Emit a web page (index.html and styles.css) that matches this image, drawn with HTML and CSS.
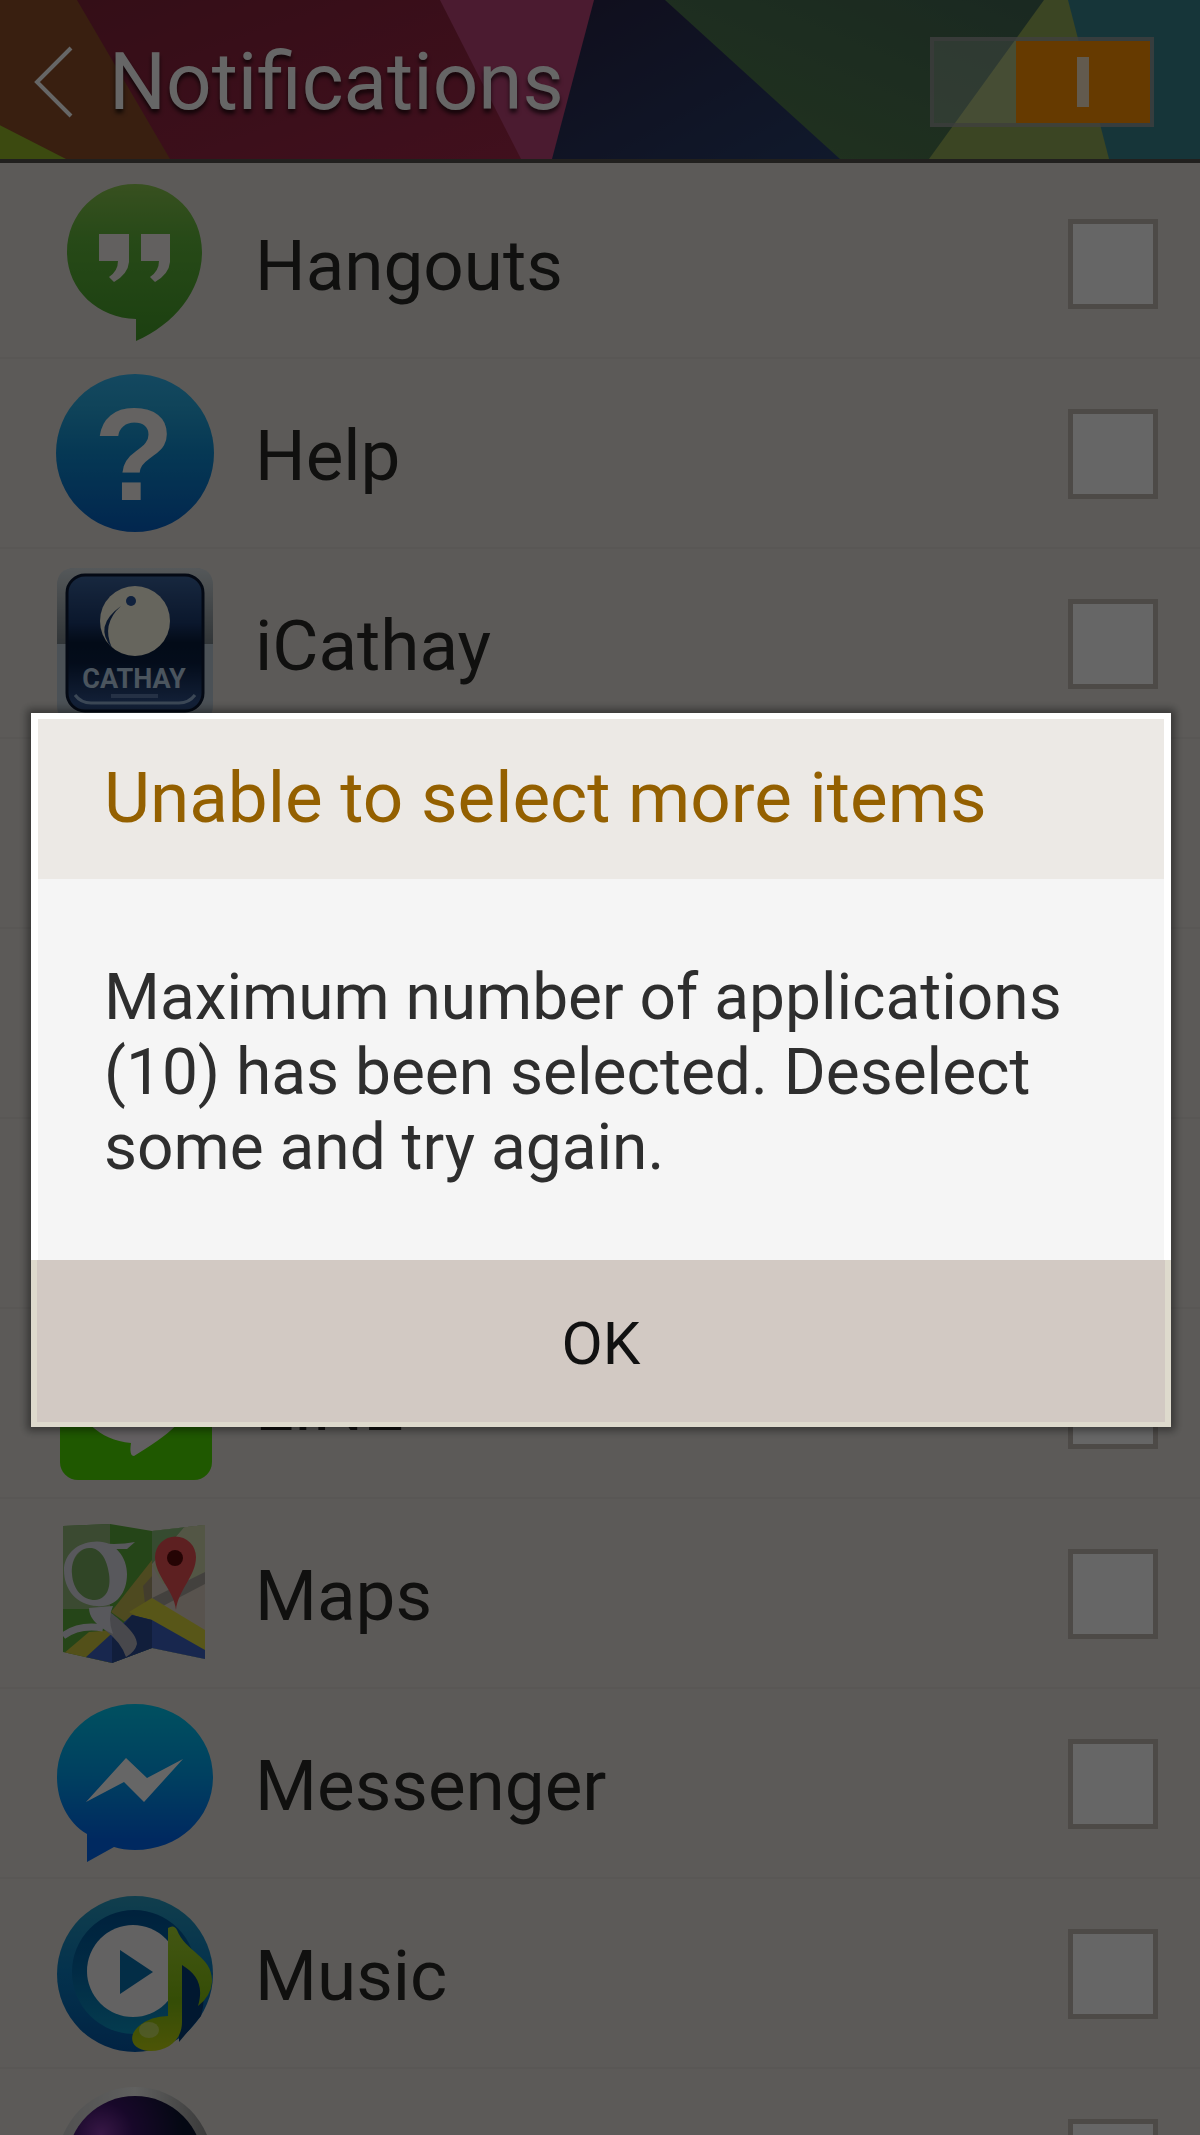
FILE: index.html
```html
<!DOCTYPE html>
<html lang="en">
<head>
<meta charset="utf-8">
<meta name="viewport" content="width=device-width, initial-scale=1">
<title>Notifications</title>
<link rel="stylesheet" href="styles.css">
</head>
<body>
<div class="screen">
  <header class="topbar">
    <svg class="topbar-art" viewBox="0 0 1200 160" preserveAspectRatio="none" aria-hidden="true">
      <defs>
        <linearGradient id="navy" x1="0" y1="0" x2="1" y2="1"><stop offset="0" stop-color="#2a2448"/><stop offset="1" stop-color="#2a406e"/></linearGradient>
        <linearGradient id="wine" x1="0" y1="0" x2="1" y2="1"><stop offset="0" stop-color="#82233a"/><stop offset="1" stop-color="#a2284a"/></linearGradient>
        <linearGradient id="forest" x1="0" y1="1" x2="1" y2="0"><stop offset="0" stop-color="#54804c"/><stop offset="1" stop-color="#426654"/></linearGradient>
      </defs>
      <rect width="1200" height="160" fill="#37868f"/>
      <path d="M1040 0H1068L1109 160H920z" fill="#94ac58"/>
      <path d="M660 0H1044L929 160H830z" fill="url(#forest)"/>
      <path d="M590 0H665L840 160H550z" fill="url(#navy)"/>
      <path d="M435 0H594L552 160H515z" fill="#bc4478"/>
      <path d="M70 0H440L521 160H160z" fill="url(#wine)"/>
      <path d="M0 0H77L170 160H0z" fill="#8e4e2a"/>
      <path d="M0 126L66 160H0z" fill="#96b928"/>
    </svg>
    <button class="back" type="button" aria-label="Back">
      <svg viewBox="0 0 44 76"><path d="M40 4L6 38L40 72" fill="none" stroke="#fff" stroke-width="4"/></svg>
    </button>
    <h1 class="title">Notifications</h1>
    <button class="switch" type="button" role="switch" aria-checked="true" aria-label="Notifications"><span class="knob"><span class="mark"></span></span></button>
  </header>

  <ul class="apps">
    <li class="app"><label class="app-label">
      <svg class="icon" viewBox="0 0 160 160">
        <defs><linearGradient id="hang" x1="0" y1="0" x2="0" y2="1"><stop offset="0" stop-color="#8cc850"/><stop offset=".35" stop-color="#62b83c"/><stop offset="1" stop-color="#46a02a"/></linearGradient></defs>
        <path d="M80 0C118 0 147 30 147 68C147 106 120 140 81 157V135C42 134 12 105 12 68C12 30 42 0 80 0z" fill="url(#hang)"/>
        <path d="M44 50H74V78Q73 90 59 98L54 93Q63 87 63 77H44zM86 50H115V78Q114 90 100 98L95 93Q104 87 104 77H86z" fill="#f6f0ee"/>
      </svg>
      <span class="name">Hangouts</span><input class="check" type="checkbox"></label></li>
    <li class="app"><label class="app-label">
      <svg class="icon" viewBox="0 0 160 160">
        <defs><linearGradient id="help" x1="0" y1="0" x2="0" y2="1"><stop offset="0" stop-color="#32b4f0"/><stop offset=".2" stop-color="#28aae0"/><stop offset=".5" stop-color="#0f8cd2"/><stop offset="1" stop-color="#0560c4"/></linearGradient></defs>
        <circle cx="80" cy="79" r="79" fill="url(#help)"/>
        <text class="help-mark" x="79" y="126">?</text>
      </svg>
      <span class="name">Help</span><input class="check" type="checkbox"></label></li>
    <li class="app"><label class="app-label">
      <svg class="icon" viewBox="0 0 160 160">
        <defs>
          <linearGradient id="cat" x1="0" y1="0" x2="0" y2="1"><stop offset="0" stop-color="#3c649e"/><stop offset=".35" stop-color="#1c3c70"/><stop offset=".5" stop-color="#081c3c"/><stop offset=".65" stop-color="#0a2044"/><stop offset="1" stop-color="#365a98"/></linearGradient>
          <linearGradient id="glass" x1="0" y1="0" x2="0" y2="1"><stop offset="0" stop-color="#d4dce0"/><stop offset="1" stop-color="#7c868c"/></linearGradient>
        </defs>
        <rect x="2" y="4" width="156" height="156" rx="18" fill="#bccad6"/>
        <path d="M2 80V22Q2 4 20 4H140Q158 4 158 22V80z" fill="url(#glass)"/>
        <rect x="12" y="11" width="136" height="136" rx="18" fill="url(#cat)" stroke="#0a1832" stroke-width="3"/>
        <path d="M20 131Q26 139 36 139H124Q134 139 140 131" fill="none" stroke="#96b4d8" stroke-width="3"/>
        <circle cx="80" cy="57" r="35" fill="#fffce8"/>
        <path d="M66 42Q46 60 57 84Q38 62 66 42z" fill="#1c3c70"/>
        <circle cx="76" cy="37" r="5" fill="#28549a"/>
        <text class="cathay" x="79" y="124">CATHAY</text>
        <path d="M56 132H103" stroke="#5c7cac" stroke-width="4"/>
      </svg>
      <span class="name">iCathay</span><input class="check" type="checkbox"></label></li>
    <li class="app"></li>
    <li class="app"></li>
    <li class="app"></li>
    <li class="app"><label class="app-label">
      <svg class="icon" viewBox="0 0 160 160">
        <rect x="5" y="5" width="152" height="151" rx="18" fill="#4edc00"/>
        <path d="M80 20C112 20 138 42 138 70C138 92 112 112 79 132Q74 132 76 119C44 116 22 94 22 70C22 42 48 20 80 20z" fill="#f6eef2"/>
      </svg>
      <span class="name">LINE</span><input class="check" type="checkbox"></label></li>
    <li class="app"><label class="app-label">
      <svg class="icon" viewBox="0 0 160 160">
        <defs><clipPath id="sheet"><path d="M8 12L55 10L97 17L150 11V145L97 134L57 149L8 138z"/></clipPath></defs>
        <g clip-path="url(#sheet)">
          <rect width="160" height="160" fill="#5cac3c"/>
          <path d="M8 8H55V95H8z" fill="#94b87c"/>
          <path d="M97 8H150V145H97z" fill="#dccfc2"/>
          <path d="M97 8H134L97 50z" fill="#88bc78"/>
          <path d="M134 8H150V62L108 70L97 52z" fill="#d0d8ac"/>
          <path d="M97 84L150 58V70L108 92z" fill="#a8a49c"/>
          <path d="M97 46L56 98L76 112L97 90z" fill="#c4b850"/>
          <path d="M88 72L97 62V92L90 90z" fill="#a89a70"/>
          <path d="M97 84L150 116V138L74 98z" fill="#dcd83c"/>
          <path d="M8 140L34 118L58 116V150H8z" fill="#d0c840"/>
          <path d="M30 144L54 122L77 101L97 106L150 136V150H30z" fill="#3c62c4"/>
          <path d="M57 149V124L77 101L97 106V150z" fill="#2c4c94"/>
          <ellipse cx="37" cy="60" rx="21" ry="27" fill="#78ac60"/>
          <path d="M55 98C62 104 82 118 82 130Q80 138 71 143Q66 128 50 116z" fill="#b4b4be"/>
          <path d="M8 122Q24 110 48 114" fill="none" stroke="#dcdce6" stroke-width="7"/>
          <path d="M34 94Q34 106 50 116L58 120Q52 104 58 92z" fill="#dcdce6"/>
          <path d="M36 28C58 24 72 42 72 60C72 80 60 94 42 92C22 91 9 76 9 56C9 42 20 30 36 28zM34 34C22 35 16 46 17 60C18 76 28 86 40 86C52 85 56 74 54 60C52 44 44 33 34 34z" fill="#dcdce6" fill-rule="evenodd"/>
          <path d="M36 28Q60 32 80 28L72 35H54z" fill="#dcdce6"/>
        </g>
        <path d="M121 96C119 76 100 62 100 43A20 20 0 0 1 141 43C141 62 123 76 121 96z" fill="#e85054"/>
        <circle cx="120" cy="44" r="8" fill="#5c0a0c"/>
      </svg>
      <span class="name">Maps</span><input class="check" type="checkbox"></label></li>
    <li class="app"><label class="app-label">
      <svg class="icon" viewBox="0 0 160 160">
        <defs><linearGradient id="msg" x1="0" y1="0" x2="0" y2="1"><stop offset="0" stop-color="#00c8f0"/><stop offset=".45" stop-color="#00a0f0"/><stop offset=".85" stop-color="#0068f0"/></linearGradient></defs>
        <path d="M80 0C124 0 158 32 158 73S124 146 80 146Q68 146 59 143L32 158V130C12 118 2 96 2 73C2 32 36 0 80 0z" fill="url(#msg)"/>
        <path d="M31 98L71 54L92 74L128 55L89 98L69 78z" fill="#fff"/>
      </svg>
      <span class="name">Messenger</span><input class="check" type="checkbox"></label></li>
    <li class="app"><label class="app-label">
      <svg class="icon" viewBox="0 0 160 160">
        <defs>
          <linearGradient id="ring" x1="0" y1="0" x2="0" y2="1"><stop offset="0" stop-color="#2a9cc0"/><stop offset=".5" stop-color="#0a7cc0"/><stop offset="1" stop-color="#0458a8"/></linearGradient>
          <linearGradient id="well" x1="0" y1="0" x2="0" y2="1"><stop offset="0" stop-color="#005498"/><stop offset=".5" stop-color="#046cac"/><stop offset="1" stop-color="#0c94c4"/></linearGradient>
          <linearGradient id="note" x1="0" y1="0" x2="0" y2="1"><stop offset="0" stop-color="#a8d830"/><stop offset=".6" stop-color="#84c010"/><stop offset="1" stop-color="#c0d410"/></linearGradient>
        </defs>
        <circle cx="80" cy="80" r="78" fill="url(#ring)"/>
        <circle cx="79" cy="78" r="62" fill="url(#well)"/>
        <circle cx="78" cy="77" r="46" fill="#f8f4f6"/>
        <path d="M65 56L98 78L65 100z" fill="#0870b0"/>
        <path d="M129 70Q156 88 146 122L124 148V70z" fill="#043c78"/>
        <path d="M113 34Q119 30 122 36C130 58 158 62 157 88Q156 102 143 112C149 92 142 80 127 71V128C127 148 110 158 94 157C76 156 72 142 84 132Q96 122 113 122z" fill="url(#note)"/>
        <ellipse cx="94" cy="136" rx="10" ry="8" fill="#d8ec90" opacity=".6"/>
      </svg>
      <span class="name">Music</span><input class="check" type="checkbox"></label></li>
    <li class="app"><label class="app-label">
      <svg class="icon" viewBox="0 0 160 160">
        <defs>
          <radialGradient id="lens" cx=".25" cy=".28" r=".6"><stop offset="0" stop-color="#8c3cb0"/><stop offset=".4" stop-color="#3c1468"/><stop offset="1" stop-color="#0c1430"/></radialGradient>
          <linearGradient id="rim" x1="0" y1="0" x2="1" y2="0"><stop offset="0" stop-color="#c8c8c8"/><stop offset=".5" stop-color="#f0f0ee"/><stop offset="1" stop-color="#8c8c8c"/></linearGradient>
        </defs>
        <circle cx="80" cy="81" r="78" fill="url(#rim)"/>
        <circle cx="80" cy="80" r="68" fill="url(#lens)"/>
      </svg>
      <span class="name"></span><input class="check" type="checkbox"></label></li>
  </ul>
</div>

<div class="scrim">
  <section class="dialog" role="alertdialog" aria-modal="true" aria-labelledby="dialog-title" aria-describedby="dialog-text">
    <h2 class="dialog-title" id="dialog-title">Unable to select more items</h2>
    <p class="dialog-text" id="dialog-text">Maximum number of applications (10) has been selected. Deselect some and try again.</p>
    <button class="dialog-ok" type="button">OK</button>
  </section>
</div>
</body>
</html>
```
FILE: styles.css
```css
* { box-sizing: border-box; }

body {
  margin: 0;
  font-family: Roboto, "Noto Sans", sans-serif;
  background: #e5e1dc;
  color: #2a2826;
}

.screen {
  height: 100vh;
  overflow: hidden;
}

/* Top bar */
.topbar {
  position: relative;
  display: flex;
  align-items: center;
  height: 163px;
  padding: 5px 46px 0 31px;
  border-bottom: 4px solid #54504c;
}

.topbar-art {
  position: absolute;
  inset: 0;
  z-index: -1;
  width: 100%;
  height: 100%;
}

.back {
  width: 44px;
  height: 76px;
  margin-right: 34px;
  padding: 0;
  border: 0;
  background: none;
}

.back svg { display: block; }

.title {
  flex: 1;
  margin: 0;
  font-size: 80px;
  line-height: 96px;
  font-weight: 400;
  color: #fff;
  text-shadow: 0 4px 4px rgba(0, 0, 0, .7);
}

.switch {
  display: flex;
  justify-content: flex-end;
  width: 224px;
  height: 90px;
  padding: 0;
  border: 4px solid rgba(150, 150, 150, .7);
  background: rgba(255, 255, 255, .26);
}

.knob {
  display: grid;
  place-items: center;
  width: 134px;
  height: 100%;
  background: #ff9100;
}

.mark {
  width: 12px;
  height: 50px;
  background: #f4e2c4;
}

/* Application list */
.apps {
  margin: 0;
  padding: 6px 0 0;
  list-style: none;
}

.app {
  height: 190px;
  border-bottom: 2px solid #dedad5;
}

.app-label {
  display: flex;
  align-items: center;
  height: 100%;
  padding: 2px 42px 0 55px;
}

.icon {
  flex: none;
  width: 160px;
  height: 160px;
}

.name {
  flex: 1;
  margin-left: 40px;
  padding-top: 4px;
  font-size: 71px;
  line-height: 80px;
}

.check {
  appearance: none;
  width: 90px;
  height: 90px;
  margin: 0;
  border: 5px solid #c0b9b2;
  background: #fff;
}

.help-mark {
  font-family: "Liberation Sans", sans-serif;
  font-size: 132px;
  font-weight: 700;
  text-anchor: middle;
  fill: #fbf6f2;
}

.cathay {
  font-size: 27px;
  font-weight: 700;
  text-anchor: middle;
  fill: #bcd4ec;
}

/* Dialog */
.scrim {
  position: fixed;
  inset: 0;
  display: grid;
  align-items: center;
  padding: 4px 29px 0 31px;
  background: rgba(0, 0, 0, .6);
}

.dialog {
  display: flex;
  flex-direction: column;
  box-shadow: 0 0 8px 4px rgba(0, 0, 0, .4);
}

.dialog-title {
  margin: 0;
  padding: 37px 66px 39px;
  border: solid #fff;
  border-width: 6px 7px 0;
  background: #ece9e5;
  color: #946000;
  font-size: 71px;
  line-height: 84px;
  font-weight: 400;
}

.dialog-text {
  margin: 0;
  padding: 81px 66px 75px;
  border: solid #fff;
  border-width: 0 7px;
  background: #f5f5f5;
  color: #2e2e2e;
  font-size: 64px;
  line-height: 75px;
}

.dialog-ok {
  height: 167px;
  padding: 6px 0 0;
  border: solid #dedacd;
  border-width: 0 6px 5px;
  background: #d2c9c3;
  color: #111;
  font: inherit;
  font-size: 60px;
}
```
